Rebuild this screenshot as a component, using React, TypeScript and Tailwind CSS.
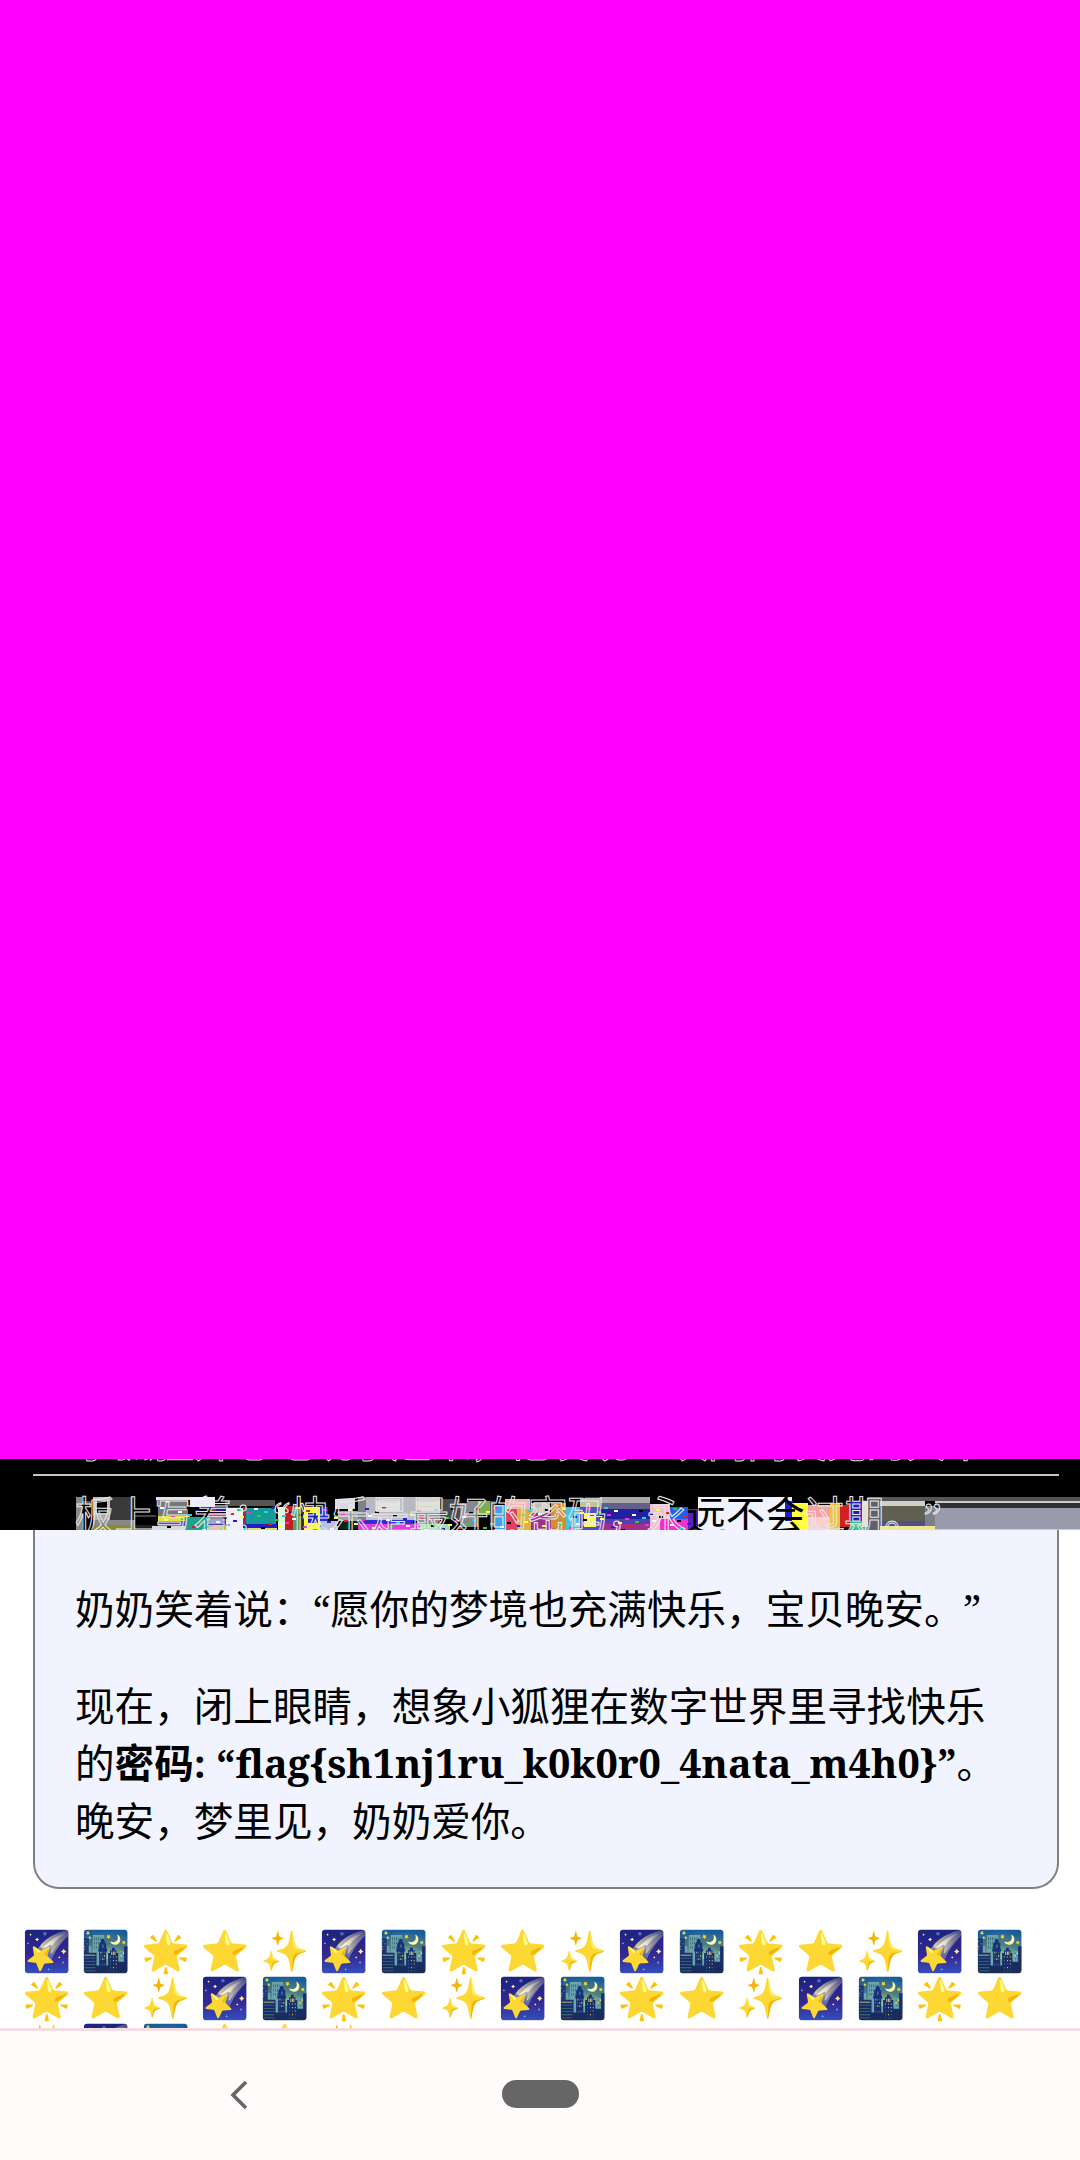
const blocks: [number, number, number, number, string][] = [
  [76, 38, 6, 33, "#8a8a80"], [82, 42, 10, 4, "#555555"], [93, 38, 17, 18, "#c0c0c0"], [97, 42, 10, 12, "#000000"], [93, 56, 17, 7, "#aaaaaa"],
  [110, 38, 23, 23, "#3a3a3a"], [93, 61, 42, 5, "#888888"], [93, 66, 42, 5, "#8a8a30"], [135, 56, 21, 2, "#444444"], [135, 66, 21, 5, "#222222"],
  [156, 38, 34, 3, "#dddddd"], [158, 41, 30, 16, "#77777f"], [158, 57, 32, 5, "#e0e040"], [158, 62, 32, 5, "#4a4ae0"], [152, 67, 38, 4, "#d8d8e0"],
  [190, 38, 25, 10, "#eeeeff"], [185, 58, 24, 13, "#20a090"], [209, 48, 32, 4, "#2020c0"], [209, 54, 32, 5, "#e040a0"], [209, 60, 32, 6, "#4040b0"], [209, 66, 32, 5, "#e0a020"],
  [225, 41, 50, 6, "#555555"], [226, 49, 17, 22, "#f0f0ff"], [243, 48, 3, 22, "#b02040"], [246, 49, 30, 16, "#149a9a"], [243, 65, 34, 4, "#2020c0"], [243, 69, 34, 2, "#e0e060"],
  [278, 48, 7, 23, "#e0ffe0"], [285, 47, 8, 24, "#c02020"], [293, 48, 7, 23, "#5aa050"], [300, 44, 4, 27, "#333333"], [304, 48, 16, 23, "#ffff30"], [308, 54, 10, 10, "#2020c0"],
  [320, 48, 8, 14, "#2030e0"], [320, 62, 18, 9, "#c0c0e0"], [335, 40, 20, 10, "#d8d8e0"], [338, 52, 20, 10, "#a0a0a8"], [340, 62, 18, 8, "#002818"], [358, 38, 8, 24, "#808088"],
  [366, 38, 74, 16, "#b8b8c0"], [376, 42, 24, 10, "#dddddd"], [416, 42, 24, 10, "#d8d8c8"], [366, 54, 50, 7, "#c0c0c8"], [358, 61, 60, 4, "#3030d0"], [358, 65, 62, 6, "#e040e0"],
  [416, 54, 24, 11, "#909098"], [420, 65, 30, 6, "#a0e0b0"], [440, 40, 20, 20, "#4a4a52"], [460, 44, 18, 24, "#888890"], [478, 42, 12, 14, "#7ab050"], [490, 42, 5, 26, "#505058"], [495, 46, 10, 25, "#40a0f0"],
  [505, 40, 25, 10, "#f0b8b0"], [505, 50, 12, 21, "#e04060"], [517, 50, 14, 21, "#e0b040"], [531, 44, 19, 10, "#c0c0b0"], [531, 54, 20, 17, "#a03090"], [551, 44, 15, 27, "#d09030"], [566, 48, 14, 23, "#50c0e0"],
  [580, 40, 20, 8, "#c0c0a0"], [580, 48, 20, 23, "#5050c0"], [584, 54, 12, 14, "#ffff50"], [600, 38, 50, 6, "#aaaaaa"], [600, 44, 50, 6, "#606088"], [600, 50, 50, 10, "#2020a0"], [600, 60, 50, 5, "#5040b0"], [600, 65, 50, 6, "#a03090"],
  [650, 45, 20, 26, "#f0c0d0"], [670, 48, 18, 18, "#2060f0"], [660, 60, 30, 11, "#f030d0"], [688, 50, 10, 21, "#6020c0"],
  [698, 38, 8, 33, "#f1f4fe"], [706, 38, 86, 33, "#f1f4fe"], [785, 42, 8, 20, "#2020c0"], [792, 44, 16, 27, "#ffff40"], [808, 46, 22, 12, "#f8a0a0"], [808, 58, 22, 13, "#f8d0d0"], [830, 44, 10, 27, "#f0c040"],
  [840, 46, 10, 22, "#d02020"], [850, 42, 12, 20, "#2020c0"], [850, 62, 18, 9, "#40c080"], [862, 42, 6, 26, "#e0e0d0"], [868, 38, 12, 33, "#606070"], [880, 38, 55, 4, "#555555"],
  [880, 42, 45, 5, "#d0d0c8"], [880, 47, 45, 15, "#606050"], [880, 62, 45, 5, "#50508a"], [880, 67, 55, 4, "#f0e890"], [925, 47, 10, 20, "#808088"],
  [935, 38, 145, 4, "#555555"], [935, 42, 145, 2, "#cccccc"], [935, 44, 145, 5, "#303034"], [935, 49, 145, 21, "#9a9aad"], [935, 70, 145, 1, "#90f0b0"],
];

const noise: [number, number, string][] = [];
const palette = ["#ffffff", "#ff30c0", "#ffff40", "#2020d0", "#30d0d0", "#30d030", "#e02020", "#000000"];
for (let i = 0; i < 150; i++) {
  const x = 160 + ((i * 97) % 530);
  const y = 48 + ((i * 31) % 23);
  noise.push([x, y, palette[(i * 5) % palette.length]]);
}

const cycle = ["🌠", "🌃", "🌟", "⭐", "✨"];
const emoji = Array.from({ length: 40 }, (_, i) => cycle[i % 5]).join(" ");

export default function App() {
  return (
    <div className="h-[2160px] w-[1080px] overflow-hidden flex flex-col bg-white font-['Noto_Serif','Noto_Sans_CJK_SC',serif] text-black [text-spacing-trim:space-all]">
      <div className="h-[1459px] shrink-0 bg-[#ff00ff]" />
      <div className="relative h-[71px] shrink-0 bg-black overflow-hidden text-[39.6px] leading-[58px] font-['Liberation_Serif','Noto_Sans_CJK_SC',serif]">
        <svg className="absolute inset-0" width="1080" height="71" viewBox="0 0 1080 71">
          {blocks.map(([x, y, w, h, c], i) => (
            <rect key={i} x={x} y={y} width={w} height={h} fill={c} />
          ))}
          {noise.map(([x, y, c], i) =>
            x > 700 && x < 790 ? null : <rect key={i} x={x} y={y} width="4" height="2" fill={c} />
          )}
          <rect x="33" y="15" width="1026" height="2" fill="#c4c4c4" />
        </svg>
        <div className="absolute left-[75px] top-[-44px] whitespace-nowrap text-transparent [-webkit-text-stroke:1px_#d8d8d8]">小狐狸开心地跳了起来，他发现一块闪闪发光的大木</div>
        <div className="absolute left-[75px] top-[29px] whitespace-nowrap">
          <span className="text-transparent [-webkit-text-stroke:1px_#e8e8e8]">板上写着：“快乐是最好的密码，永</span>
          <span>远不会</span>
          <span className="text-transparent [-webkit-text-stroke:1px_#e8e8e8]">过期。”</span>
        </div>
      </div>
      <div className="flex-1 min-h-0 overflow-hidden">
        <div className="ml-[33px] w-[1026px] border-2 border-t-0 border-[#808080] rounded-b-[26px] bg-[#f1f4fe] pl-[40px] pr-[50px] pb-[37px] text-[39.6px] leading-[57.5px]">
          <p className="pt-[51px]">奶奶笑着说：“愿你的梦境也充满快乐，宝贝晚安。”</p>
          <p className="mt-[39px]">
            现在，闭上眼睛，想象小狐狸在数字世界里寻找快乐的<strong>密码: “flag{"{"}sh1nj1ru_k0k0r0_4nata_m4h0{"}"}”</strong>。<br />晚安，梦里见，奶奶爱你。
          </p>
        </div>
        <div className="mt-[38px] ml-[22px] w-[1040px] font-['Noto_Serif','Noto_Color_Emoji'] text-[39.6px] leading-[47px]">{emoji}</div>
      </div>
      <div className="h-[132px] shrink-0 border-t-[3px] border-[#f3dde3] bg-[#fffbfa] flex items-start">
        <svg className="ml-[228px] mt-[48px]" width="22" height="32" viewBox="0 0 22 32">
          <path d="M18 3 L5 16 L18 29" fill="none" stroke="#666666" strokeWidth="3.6" />
        </svg>
        <div className="ml-[252px] mt-[49px] h-[28px] w-[77px] rounded-full bg-[#666666]" />
      </div>
    </div>
  );
}
